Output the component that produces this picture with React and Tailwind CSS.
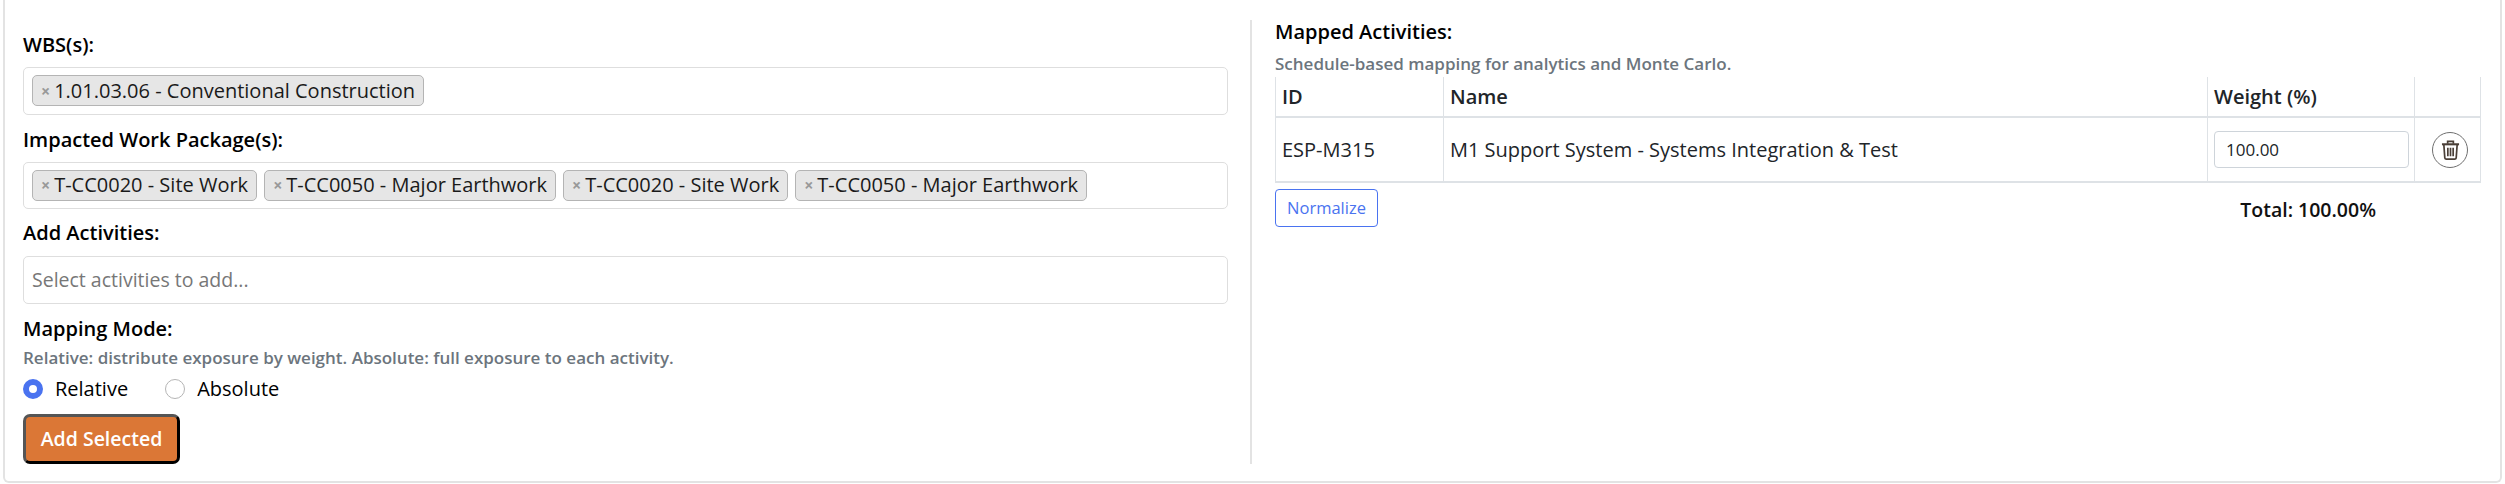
import React from 'react';

const font = "font-['Open_Sans','Noto_Sans',sans-serif]";

const Tag = ({ children }) => (
  <span className="flex items-center h-[31px] pl-[8px] pr-[8px] rounded-[5px] border border-[#b4b4b4] bg-[#e6e6e6] text-[20px] text-[#1a1a1a] whitespace-nowrap">
    <span className="text-[16px] font-bold text-[#999] mr-[4px]">×</span>
    {children}
  </span>
);

const Label = ({ children, className = '' }) => (
  <div className={`text-[20px] font-semibold leading-[24px] text-black ${className}`}>{children}</div>
);

const Help = ({ children, className = '' }) => (
  <div className={`text-[17px] font-semibold leading-[20px] text-[#6c757d] ${className}`}>{children}</div>
);

const Radio = ({ checked, children }) => (
  <label className="flex items-center gap-[12px] text-[20px] text-black">
    {checked ? (
      <span className="w-[20px] h-[20px] rounded-full border-[6px] border-[#4a73f0] bg-white" />
    ) : (
      <span className="w-[20px] h-[20px] rounded-full border border-[#b5b5b5] bg-white" />
    )}
    {children}
  </label>
);

const TrashIcon = () => (
  <svg width="19" height="20" viewBox="0 0 20 21" fill="none" stroke="#4a3f37" strokeWidth="1.8">
    <path d="M1 4.5h18" strokeWidth="2.2" />
    <path d="M7 4V1.5h6V4" />
    <path d="M3 5l1 13.7c0 .7.6 1.3 1.3 1.3h9.4c.7 0 1.3-.6 1.3-1.3L17 5" />
    <path d="M7.2 8v9M10 8v9M12.8 8v9" />
  </svg>
);

export default function App() {
  return (
    <div className={`${font} h-[484px] bg-white px-[3px] pb-px`}>
      <div className="h-full flex border-x-2 border-b-2 border-[#e3e3e3] rounded-b-[6px] pt-[20px] pb-[17px] pl-[18px] pr-[19px]">
        <div className="w-[1229px] pr-[22px] shrink-0 border-r-2 border-[#e3e3e3] flex flex-col">
          <Label className="mt-[13px]">WBS(s):</Label>
          <div className="mt-[10px] h-[48px] flex items-center gap-[6px] px-[8px] rounded-[5px] border border-[#dedede]">
            <Tag>1.01.03.06 - Conventional Construction</Tag>
          </div>
          <Label className="mt-[13px]">Impacted Work Package(s):</Label>
          <div className="mt-[10px] h-[48px] flex items-center gap-[7px] px-[8px] rounded-[5px] border border-[#dedede]">
            <Tag>T-CC0020 - Site Work</Tag>
            <Tag>T-CC0050 - Major Earthwork</Tag>
            <Tag>T-CC0020 - Site Work</Tag>
            <Tag>T-CC0050 - Major Earthwork</Tag>
          </div>
          <Label className="mt-[12px]">Add Activities:</Label>
          <div className="mt-[11px] h-[48px] flex items-center px-[8px] rounded-[5px] border border-[#dedede] text-[19.5px] text-[#777]">
            Select activities to add...
          </div>
          <Label className="mt-[13px]">Mapping Mode:</Label>
          <Help className="mt-[7px]">Relative: distribute exposure by weight. Absolute: full exposure to each activity.</Help>
          <div className="mt-[9px] flex gap-[37px] leading-[24px]">
            <Radio checked>Relative</Radio>
            <Radio>Absolute</Radio>
          </div>
          <button className="mt-[13px] w-[157px] h-[51px] rounded-[7px] border-[3px] border-t-[#555] border-l-[#555] border-r-black border-b-black bg-[#db7736] text-white text-[19.5px] font-semibold">
            Add Selected
          </button>
        </div>
        <div className="flex-1 pl-[23px]">
          <Label>Mapped Activities:</Label>
          <Help className="mt-[10px]">Schedule-based mapping for analytics and Monte Carlo.</Help>
          <table className="mt-[3px] w-[1205px] table-fixed border-collapse text-[20px] text-[#212529]">
            <colgroup>
              <col className="w-[168px]" />
              <col className="w-[764px]" />
              <col className="w-[207px]" />
              <col className="w-[66px]" />
            </colgroup>
            <thead>
              <tr className="h-[40px] text-left border-b-2 border-[#dee2e6]">
                <th className="font-semibold px-[6px] border-x border-[#dee2e6]">ID</th>
                <th className="font-semibold px-[6px] border-x border-[#dee2e6]">Name</th>
                <th className="font-semibold px-[6px] border-x border-[#dee2e6]">Weight (%)</th>
                <th className="border-x border-[#dee2e6]" />
              </tr>
            </thead>
            <tbody>
              <tr className="h-[65px] border-b-2 border-[#dee2e6]">
                <td className="px-[6px] border-x border-[#dee2e6]">ESP-M315</td>
                <td className="px-[6px] border-x border-[#dee2e6]">M1 Support System - Systems Integration &amp; Test</td>
                <td className="pl-[6px] pr-[5px] border-x border-[#dee2e6]">
                  <div className="h-[37px] flex items-center pl-[11px] rounded-[4px] border border-[#ced4da] text-[17px]">100.00</div>
                </td>
                <td className="border-x border-[#dee2e6]">
                  <button className="ml-[17px] flex items-center justify-center w-[36px] h-[36px] rounded-full border-[1.5px] border-[#6f6f6f]">
                    <TrashIcon />
                  </button>
                </td>
              </tr>
            </tbody>
          </table>
          <div className="mt-[6px] w-[1205px] flex items-start justify-between">
            <button className="w-[103px] h-[38px] rounded-[4px] border border-[#4a73f0] text-[#4a73f0] text-[16.5px]">Normalize</button>
            <span className="mr-[104px] mt-[6px] text-[19.5px] font-semibold text-[#111]">Total: 100.00%</span>
          </div>
        </div>
      </div>
    </div>
  );
}
